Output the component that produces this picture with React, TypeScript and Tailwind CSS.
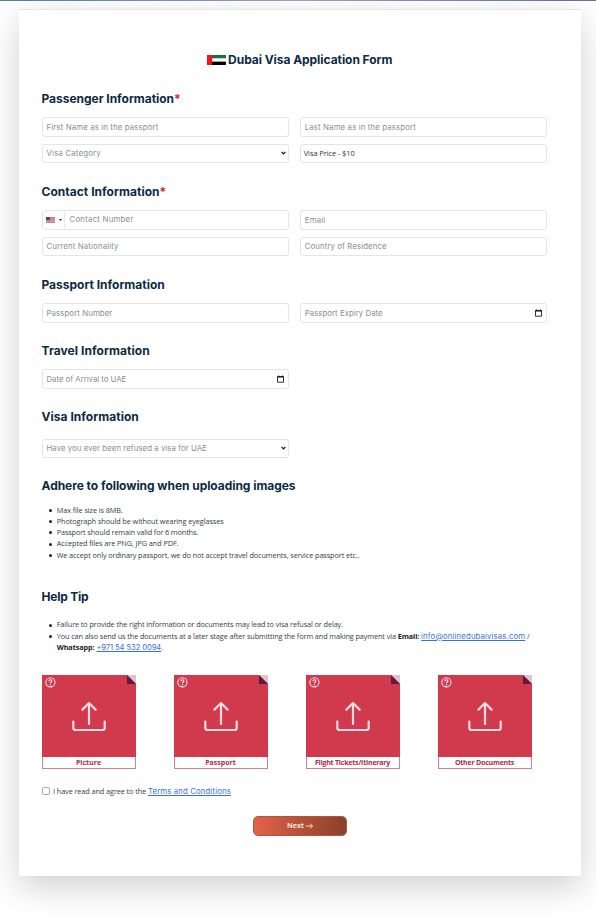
import type { ReactNode } from 'react';

const GEO = "font-['Inter','Open_Sans',sans-serif]";

function Heading({ children, className = '' }: { children: ReactNode; className?: string }) {
  return (
    <h2 className={`${GEO} h-[18px] whitespace-nowrap text-[12px] leading-[18px] font-bold text-[#0c2a43] ${className}`}>
      {children}
    </h2>
  );
}

function Star() {
  return <span className="text-[#e0202c]">*</span>;
}

function Field({ label, className = 'tracking-[0.12px]', icon }: { label: string; className?: string; icon?: ReactNode }) {
  return (
    <div className="flex h-[19.5px] items-center justify-between rounded-[3px] border border-[#e3e4e6] bg-white pl-1">
      <span className={`${GEO} pt-[1.5px] text-[7.8px] leading-none whitespace-nowrap text-[#8b8e92] ${className}`}>{label}</span>
      {icon}
    </div>
  );
}

function Chevron() {
  return (
    <svg className="mr-[2px] h-[4px] w-[5px]" viewBox="0 0 5 4" fill="none" stroke="#111" strokeWidth="1.2">
      <path d="M0.6 0.8 2.5 2.8 4.4 0.8" />
    </svg>
  );
}

function Calendar() {
  return (
    <svg className="mr-[4px] h-[8px] w-[7px]" viewBox="0 0 7 8" fill="none" stroke="#1b1b1b">
      <path d="M0.5 1.6h6v5.6h-6z" strokeWidth="0.9" />
      <path d="M0.3 1.8h6.4" strokeWidth="1.4" />
      <path d="M1.6 0.4v1.2M5.4 0.4v1.2" strokeWidth="0.8" />
    </svg>
  );
}

function UaeFlag() {
  return (
    <svg className="mr-[2px] h-[10px] w-[19px]" viewBox="0 0 19 10">
      <rect width="19" height="10" fill="#fff" />
      <rect width="19" height="3.3" fill="#17733b" />
      <rect y="6.6" width="19" height="3.4" fill="#050505" />
      <rect width="5.2" height="10" fill="#ee1616" />
    </svg>
  );
}

function UsFlag() {
  return (
    <svg className="h-[6px] w-[9px]" viewBox="0 0 9 6">
      <rect width="9" height="6" fill="#e3b6bd" />
      <path d="M0 .4h9M0 1.6h9M0 2.8h9M0 4h9M0 5.4h9" stroke="#c05867" strokeWidth=".6" />
      <rect width="4" height="3.2" fill="#4b4a78" />
    </svg>
  );
}

function UploadTile({ label, className }: { label: string; className: string }) {
  return (
    <div className="flex h-[94px] w-[94px] flex-col border border-[#d9808d] bg-white">
      <svg className="-mx-px -mt-px h-[82px] w-[94px] shrink-0" viewBox="0 0 94 82" fill="none">
        <rect width="94" height="82" fill="#d1394d" />
        <path d="M85 0h9v9z" fill="#dcc5cc" />
        <path d="M85 0v9h9z" fill="#641a3c" />
        <circle cx="8.4" cy="7.3" r="4.6" stroke="#fbdfe4" strokeWidth="1.1" />
        <path d="M6.9 6.2c0-1 .7-1.5 1.5-1.5s1.5.5 1.5 1.3c0 1-1.5 1-1.5 2.2" stroke="#fff0f2" strokeWidth="1.15" />
        <circle cx="8.4" cy="9.7" r=".7" fill="#fff0f2" />
        <g stroke="#fbdce2" strokeWidth="2.2" strokeLinecap="round" strokeLinejoin="round">
          <path d="M47 49V28M40.4 34.6 47 28l6.6 6.6" />
          <path d="M31.3 46.5v6.2c0 1.3.9 2.3 2.3 2.3h26.8c1.4 0 2.3-1 2.3-2.3v-6.2" />
        </g>
      </svg>
      <span className={`text-center text-[7px] leading-[11px] font-bold whitespace-nowrap text-[#b02a41] ${className}`}>{label}</span>
    </div>
  );
}

function Bullet({ children, className = '' }: { children: ReactNode; className?: string }) {
  return (
    <li className="flex">
      <span className="mt-[4.2px] mr-[4.8px] ml-[7.4px] h-[3px] w-[3px] shrink-0 rounded-full bg-[#1c2126]" />
      <div className={className}>{children}</div>
    </li>
  );
}

export default function App() {
  return (
    <div className="h-[919px] w-[596px] overflow-hidden bg-white font-['Open_Sans','Noto_Sans',sans-serif] text-[#373d43]">
      <div className="h-px bg-linear-to-r from-[#527ea9] via-[#a2a3b8] to-[#626fa0]" />
      <main className="mt-[8px] ml-[19px] h-[867px] w-[562px] border-t border-[#e7e7e7] bg-white pl-[22.5px] shadow-[0_11px_32px_rgba(0,0,0,0.19)]">
        <div className="w-[505.5px]">
          <h1 className={`${GEO} mt-[41px] flex h-[18px] items-center justify-center pl-[11px] text-[12px] leading-[18px] font-bold whitespace-nowrap text-[#0c2a43]`}>
            <UaeFlag />
            <span className="tracking-[-0.05px]">Dubai Visa Application Form</span>
          </h1>

          <Heading className="mt-[21px] tracking-[-0.03px]">Passenger Information<Star /></Heading>
          <div className="mt-[9px] grid grid-cols-2 gap-x-[11px] gap-y-[7px]">
            <Field label="First Name as in the passport" className="tracking-[0.14px]" />
            <Field label="Last Name as in the passport" className="tracking-[0.14px]" />
            <Field label="Visa Category" className="tracking-[0.19px]" icon={<Chevron />} />
            <div className="flex h-[19.5px] items-center rounded-[3px] border border-[#e3e4e6] pt-px pl-[3px] text-[7.5px] leading-none tracking-[-0.1px] text-[#30363b]">
              Visa Price - $10
            </div>
          </div>

          <Heading className="mt-[20px] tracking-[0.03px]">Contact Information<Star /></Heading>
          <div className="mt-[9px] grid grid-cols-2 gap-x-[11px] gap-y-[7px]">
            <div className="flex h-[19.5px] items-center rounded-[3px] border border-[#e3e4e6]">
              <div className="flex h-full w-[22px] items-center border-r border-[#e9e9ec] pl-[3.5px]">
                <UsFlag />
                <svg className="ml-[4px] h-[2px] w-[3px]" viewBox="0 0 3 2"><path d="M0 0h3L1.5 2z" fill="#333" /></svg>
              </div>
              <span className={`${GEO} pt-px pl-[5px] text-[7.8px] leading-none tracking-[0.24px] text-[#8b8e92]`}>Contact Number</span>
            </div>
            <Field label="Email" className="tracking-[0.2px]" />
            <Field label="Current Nationality" className="tracking-[0.15px]" />
            <Field label="Country of Residence" className="tracking-[0.1px]" />
          </div>

          <Heading className="mt-[20px] tracking-[-0.01px]">Passport Information</Heading>
          <div className="mt-[9px] grid grid-cols-2 gap-x-[11px]">
            <Field label="Passport Number" className="tracking-[0.1px]" />
            <Field label="Passport Expiry Date" className="tracking-[0.04px]" icon={<Calendar />} />
          </div>

          <Heading className="mt-[19.5px] tracking-[0.06px]">Travel Information</Heading>
          <div className="mt-[9px] grid grid-cols-2 gap-x-[11px]">
            <Field label="Date of Arrival to UAE" className="tracking-[-0.02px]" icon={<Calendar />} />
          </div>

          <Heading className="mt-[19.5px] tracking-[0.03px]">Visa Information</Heading>
          <div className="mt-[12.5px] grid grid-cols-2 gap-x-[11px]">
            <Field label="Have you ever been refused a visa for UAE" className="tracking-[0.06px]" icon={<Chevron />} />
          </div>

          <Heading className="mt-[19px] tracking-[-0.05px]">Adhere to following when uploading images</Heading>
          <ul className="mt-[9.5px] text-[7.3px] leading-[11.3px] tracking-[-0.08px] whitespace-nowrap">
            <Bullet>Max file size is 8MB.</Bullet>
            <Bullet>Photograph should be without wearing eyeglasses</Bullet>
            <Bullet className="tracking-[-0.12px]">Passport should remain valid for 6 months.</Bullet>
            <Bullet>Accepted files are PNG, JPG and PDF.</Bullet>
            <Bullet className="tracking-[-0.1px]">We accept only ordinary passport, we do not accept travel documents, service passport etc..</Bullet>
          </ul>

          <Heading className="mt-[27px] tracking-[-0.22px]">Help Tip</Heading>
          <ul className="mt-[13.5px] text-[7.3px] leading-[11.3px] tracking-[-0.1px] whitespace-nowrap">
            <Bullet>Failure to provide the right information or documents may lead to visa refusal or delay.</Bullet>
            <Bullet>
              You can also send us the documents at a later stage after submitting the form and making payment via{' '}
              <b className="text-[#1c2126]">Email:</b>{' '}
              <a className={`${GEO} text-[7.8px] tracking-[0.12px] text-[#3a71d8] underline`}>info@onlinedubaivisas.com</a> /<br />
              <b className="text-[#1c2126]">Whatsapp:</b>{' '}
              <a className={`${GEO} text-[7.6px] tracking-[-0.08px] text-[#3a71d8] underline`}>+971 54 532 0094</a>.
            </Bullet>
          </ul>

          <div className="mt-[21.5px] flex gap-[38px]">
            <UploadTile label="Picture" className="" />
            <UploadTile label="Passport" className="" />
            <UploadTile label="Flight Tickets/Itinerary" className="tracking-[-0.2px]" />
            <UploadTile label="Other Documents" className="tracking-[-0.2px]" />
          </div>

          <div className="mt-[16.5px] flex h-[12px] items-center text-[7.3px] leading-[12px] tracking-[-0.09px] whitespace-nowrap">
            <span className="mr-[3.5px] h-[8px] w-[8px] rounded-[2px] border border-[#a9abad]" />
            <span>I have read and agree to the <a className={`${GEO} text-[7.8px] tracking-[0.12px] text-[#3a71d8] underline`}>Terms and Conditions</a></span>
          </div>

          <button className="mt-[18.5px] ml-[211.5px] flex h-[20px] w-[94px] items-center justify-center rounded-[5px] border border-[#a95842] bg-linear-to-r from-[#e36249] to-[#8d4029] text-[7.4px] leading-none font-semibold text-white">
            Next
            <svg className="ml-[2px] h-[6px] w-[7px]" viewBox="0 0 8 6" fill="none" stroke="#fff" strokeWidth=".9" strokeLinecap="round">
              <path d="M.5 3h6.8M5 .7 7.4 3 5 5.3" />
            </svg>
          </button>
        </div>
      </main>
    </div>
  );
}
